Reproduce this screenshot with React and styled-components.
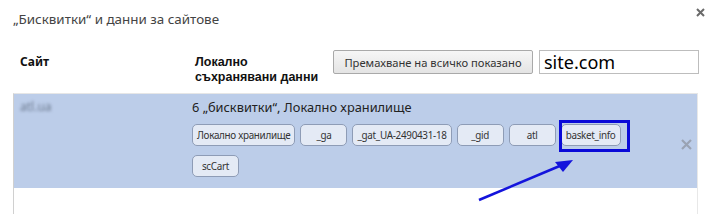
import React from "react";
import styled, { createGlobalStyle } from "styled-components";

const Global = createGlobalStyle`
  html, body { margin: 0; padding: 0; background: #fff; }
  body { font-family: "Noto Sans", "Open Sans", sans-serif; color: #333; }
`;

const Dialog = styled.div`
  position: relative;
  width: 715px;
  height: 214px;
  overflow: hidden;
  background: #fff;
`;

const TitleBar = styled.div`
  display: flex;
  justify-content: space-between;
  align-items: flex-start;
  padding: 0 9px 0 13px;
  height: 32px;
  box-sizing: border-box;
`;

const Title = styled.h1`
  margin: 9px 0 0;
  font-size: 13.4px;
  font-weight: 400;
  color: #444;
  line-height: 20px;
`;

const CloseButton = styled.button`
  border: 0;
  background: transparent;
  padding: 0;
  margin: 6px 0 0;
  width: 12px;
  height: 12px;
  display: flex;
  align-items: center;
  justify-content: center;
  cursor: pointer;
`;

const HeaderRow = styled.div`
  display: flex;
  align-items: flex-start;
  padding: 18px 0 0 20px;
  height: 61px;
  box-sizing: border-box;
`;

const SiteHeader = styled.div`
  width: 175px;
  font-size: 12px;
  font-weight: 700;
  color: #111;
  line-height: 14px;
  padding-top: 5px;
`;

const DataHeader = styled.div`
  width: 138px;
  display: flex;
  flex-direction: column;
  padding-top: 5px;
`;

const HeaderLine = styled.span`
  font-family: "Liberation Sans", Arial, sans-serif;
  font-size: 12.5px;
  font-weight: 700;
  color: #111;
  line-height: 14.5px;
  white-space: nowrap;
`;

const RemoveAll = styled.button`
  height: 24px;
  width: 200px;
  box-sizing: border-box;
  border: 1px solid #a9a9a9;
  border-radius: 2px;
  background: linear-gradient(#f6f6f6, #e4e4e4);
  font-family: inherit;
  font-size: 11.2px;
  color: #333;
  padding: 0 6px;
  white-space: nowrap;
`;

const Search = styled.input`
  margin-left: 6px;
  height: 24px;
  width: 160px;
  box-sizing: border-box;
  border: 1px solid #bdbdbd;
  font-family: inherit;
  font-size: 18px;
  color: #000;
  padding: 0 4px;
  outline: none;
`;

const List = styled.div`
  margin: 0 17px 0 13px;
  border-top: 1px solid #e6e6e6;
  border-left: 1px solid #d0d0d0;
  border-right: 1px solid #e8e8e8;
  height: 130px;
`;

const Row = styled.div`
  display: flex;
  background: #bccde9;
  height: 94px;
  padding: 4px 0 0 6px;
  box-sizing: border-box;
`;

const SiteName = styled.div`
  width: 172px;
  font-size: 12px;
  line-height: 18px;
  color: #6c7a90;
  filter: blur(1.4px);
`;

const Details = styled.div`
  flex: 1;
  display: flex;
  flex-direction: column;
`;

const Summary = styled.div`
  font-size: 12.8px;
  line-height: 18px;
  color: #222;
  margin-bottom: 8px;
`;

const Chips = styled.div`
  display: flex;
  flex-wrap: wrap;
  gap: 9px 5px;
  width: 450px;
`;

const Chip = styled.span`
  position: relative;
  min-width: 47px;
  height: 22px;
  box-sizing: border-box;
  padding: 0 4px;
  display: inline-flex;
  align-items: center;
  justify-content: center;
  border: 1px solid #8e9cb6;
  border-radius: 5px;
  background: #e4eaf5;
  font-size: 9.9px;
  letter-spacing: -0.3px;
  color: #333;
  white-space: nowrap;
`;

const Highlight = styled.span`
  position: absolute;
  left: -3px;
  right: -10px;
  top: -5px;
  bottom: -7px;
  border: 3px solid #0a0ad8;
  pointer-events: none;
`;

const RowDelete = styled.div`
  width: 22px;
  display: flex;
  justify-content: center;
  padding-top: 41px;
`;

const Arrow = styled.svg`
  position: absolute;
  left: 470px;
  top: 150px;
  overflow: visible;
`;

const chips = [
  "Локално хранилище",
  "_ga",
  "_gat_UA-2490431-18",
  "_gid",
  "atl",
  "basket_info",
  "scCart",
];

export default function App() {
  return (
    <Dialog>
      <Global />
      <TitleBar>
        <Title>„Бисквитки“ и данни за сайтове</Title>
        <CloseButton aria-label="close">
          <svg width="9" height="9" viewBox="0 0 9 9">
            <path d="M1 1L8 8M8 1L1 8" stroke="#6a6a6a" strokeWidth="2" />
          </svg>
        </CloseButton>
      </TitleBar>
      <HeaderRow>
        <SiteHeader>Сайт</SiteHeader>
        <DataHeader>
          <HeaderLine>Локално</HeaderLine>
          <HeaderLine>съхранявани данни</HeaderLine>
        </DataHeader>
        <RemoveAll>Премахване на всичко показано</RemoveAll>
        <Search defaultValue="site.com" />
      </HeaderRow>
      <List>
        <Row>
          <SiteName>atl.ua</SiteName>
          <Details>
            <Summary>6 „бисквитки“, Локално хранилище</Summary>
            <Chips>
              {chips.map((c) => (
                <Chip key={c}>
                  {c}
                  {c === "basket_info" && <Highlight />}
                </Chip>
              ))}
            </Chips>
          </Details>
          <RowDelete>
            <svg width="11" height="11" viewBox="0 0 11 11">
              <path d="M1 1L10 10M10 1L1 10" stroke="#9aa3b3" strokeWidth="2.2" />
            </svg>
          </RowDelete>
        </Row>
      </List>
      <Arrow width="110" height="60" viewBox="0 0 110 60">
        <path d="M9 50L92 15" stroke="#1414dc" strokeWidth="2.6" />
        <path d="M103 10L85 12L93 22Z" fill="#1414dc" />
      </Arrow>
    </Dialog>
  );
}
